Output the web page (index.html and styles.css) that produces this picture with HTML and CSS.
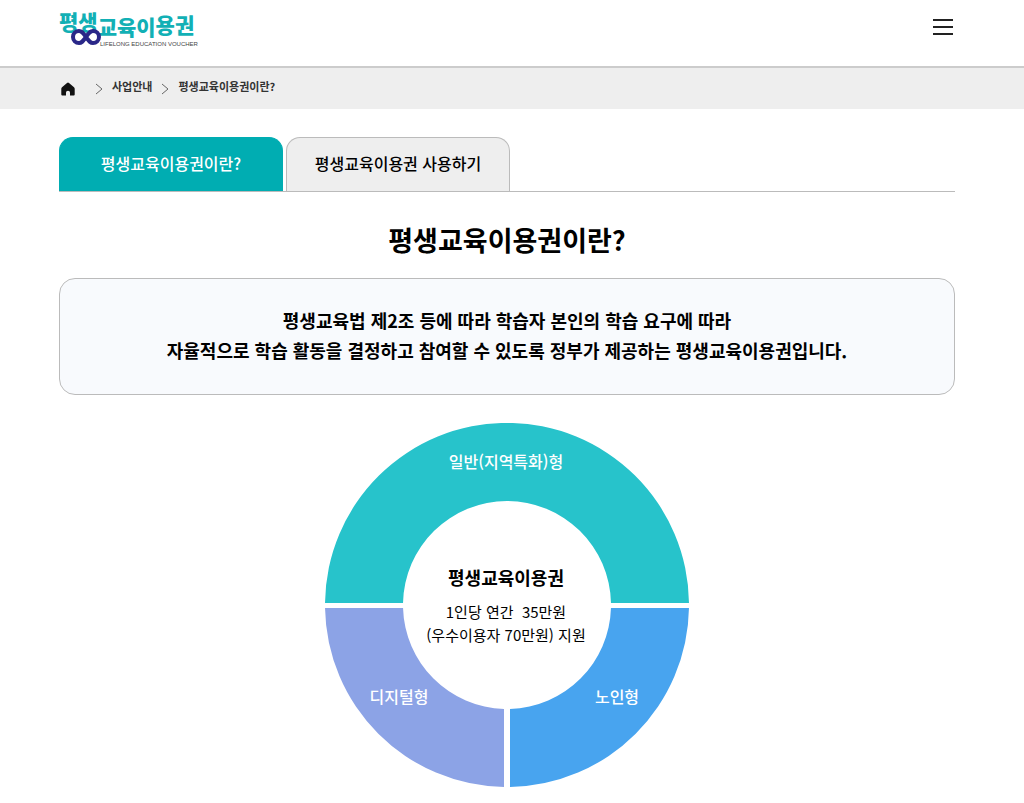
FILE: index.html
```html
<!DOCTYPE html>
<html lang="ko">
<head>
  <meta charset="UTF-8" />
  <meta name="viewport" content="width=device-width, initial-scale=1" />
  <title>평생교육이용권이란?</title>
  <link rel="stylesheet" href="styles.css">
</head>
<body>
  <header class="header">
    <a href="#" class="logo" aria-label="평생교육이용권">
      <svg width="140" height="46" viewBox="0 0 140 46">
        <text class="logo-name" x="0" y="26">평생<tspan dy="5">교육이</tspan><tspan dy="-2">용권</tspan></text>
        <path class="logo-ring" d="M27 33C24 29 23 27 20 27A6 6 0 0 0 20 39C23 39 24 37 27 33C30 29 31 27 34 27A6 6 0 0 1 34 39C31 39 30 37 27 33Z" />
        <text class="logo-sub" x="41" y="42">LIFELONG EDUCATION VOUCHER</text>
      </svg>
    </a>
    <button type="button" class="menu-btn" aria-label="전체메뉴">
      <svg width="20" height="16" viewBox="0 0 20 16"><path d="M0 1h20M0 8h20M0 15h20" stroke="#222" stroke-width="2" /></svg>
    </button>
  </header>

  <nav class="breadcrumb" aria-label="현재 위치">
    <a href="#" class="home" aria-label="홈">
      <svg width="14" height="14" viewBox="0 0 14 14"><path d="M7 0.500Q7.500 0.500 8 1L13 5.200Q13.700 5.800 13.700 6.700V12.500Q13.700 13.500 12.700 13.500H9V10.500Q9 8.700 7 8.700T5 10.500V13.500H1.300Q0.300 13.500 0.300 12.500V6.700Q0.300 5.800 1 5.200L6 1Q6.500 0.500 7 0.500Z" fill="#111" /></svg>
    </a>
    <svg class="arrow" width="8" height="12" viewBox="0 0 8 12"><path d="M1 1l6 5-6 5" /></svg>
    <a href="#">사업안내</a>
    <svg class="arrow" width="8" height="12" viewBox="0 0 8 12"><path d="M1 1l6 5-6 5" /></svg>
    <a href="#">평생교육이용권이란?</a>
  </nav>

  <main class="content">
    <div class="tabs">
      <a href="#" class="tab active">평생교육이용권이란?</a>
      <a href="#" class="tab">평생교육이용권 사용하기</a>
    </div>

    <h1>평생교육이용권이란?</h1>

    <p class="intro">평생교육법 제2조 등에 따라 학습자 본인의 학습 요구에 따라<br>자율적으로 학습 활동을 결정하고 참여할 수 있도록 정부가 제공하는 평생교육이용권입니다.</p>

    <svg class="chart" width="364" height="364" viewBox="0 0 364 364">
      <path d="M0.010 180A182 182 0 0 1 363.990 180H285.980A104 104 0 0 0 78.020 180Z" fill="#27c3cb" />
      <path d="M0.020 185H78.040A104 104 0 0 0 179 285.960V363.980A182 182 0 0 1 0.020 185Z" fill="#8ca3e6" />
      <path d="M363.980 185H285.960A104 104 0 0 1 185 285.960V363.980A182 182 0 0 0 363.980 185Z" fill="#48a4ef" />
      <g class="label">
        <text x="181" y="45">일반(지역특화)형</text>
        <text x="74" y="280">디지털형</text>
        <text x="292" y="280">노인형</text>
      </g>
      <text class="center-title" x="181" y="162">평생교육이용권</text>
      <text class="center-text" x="181" y="195">1인당 연간&#160; 35만원</text>
      <text class="center-text" x="181" y="218">(우수이용자 70만원) 지원</text>
    </svg>
  </main>
</body>
</html>
```
FILE: styles.css
```css
* { box-sizing: border-box; }
body { margin: 0; font-family: "Noto Sans CJK KR", sans-serif; color: #000; background: #fff; }
a { color: inherit; text-decoration: none; }
svg { display: block; }

.header { display: flex; justify-content: space-between; align-items: flex-start; height: 68px; padding: 4px 71px 0 59px; border-bottom: 2px solid #ccc; }
.logo-name { fill: #12b0b5; font-size: 21px; font-weight: 900; }
.logo-ring { fill: none; stroke: #2a2788; stroke-width: 4; }
.logo-sub { fill: #444; font-family: "Liberation Sans", sans-serif; font-size: 6px; }
.menu-btn { margin-top: 15px; padding: 0; border: 0; background: none; cursor: pointer; }

.breadcrumb { display: flex; align-items: center; height: 41px; padding: 0 69px 6px 61px; background: #eee; font-size: 11px; font-weight: 700; color: #333; }
.home { margin: 6px 20px 0 0; }
.arrow { margin: 6px 9px 0 0; fill: none; stroke: #666; }
.breadcrumb a + .arrow { margin-left: 9px; }
.breadcrumb .home + .arrow { margin-left: 0; }

.content { padding: 28px 69px 16px 59px; }
.tabs { display: flex; gap: 3px; border-bottom: 1px solid #bbb; }
.tab { width: 224px; height: 54px; border: 1px solid #bbb; border-bottom: 0; border-radius: 14px 14px 0 0; background: #eee; font-size: 16px; line-height: 50px; text-align: center; font-weight: 500; }
.tab.active { border-color: #00adb2; background: #00adb2; color: #fff; }

h1 { margin: 28px 0 18px; font-size: 27px; line-height: 40px; text-align: center; font-weight: 700; }
.intro { margin: 0; padding: 26px 20px 29px; border: 1px solid #bbb; border-radius: 16px; background: #f8fafd; font-size: 18px; line-height: 30px; text-align: center; font-weight: 700; }

.chart { margin: 28px auto 0; text-anchor: middle; }
.label { fill: #fff; font-size: 16px; font-weight: 500; }
.center-title { font-size: 18px; font-weight: 700; }
.center-text { font-size: 15px; }
```
